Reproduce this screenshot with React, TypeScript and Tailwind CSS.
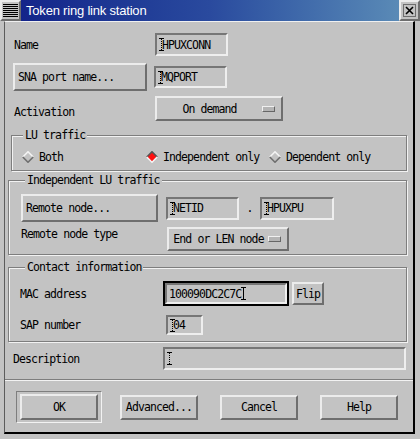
import React from "react";

const mono =
  "font-['DejaVu_Sans_Mono',monospace] text-[11.5px] leading-[14px] tracking-[-0.9px] text-black";

const raised =
  "border-2 border-t-[#ececec] border-l-[#ececec] border-b-[#6e6e6e] border-r-[#6e6e6e]";
const sunken =
  "border-2 border-t-[#767676] border-l-[#767676] border-b-[#eeeeee] border-r-[#eeeeee]";
const etched =
  "border border-[#7e7e7e] shadow-[inset_1px_1px_0_#f2f2f2,1px_1px_0_#f2f2f2]";

// dotted i-beam shown in fields that don't have focus
function Caret({ active = false }: { active?: boolean }) {
  return (
    <svg width="5" height="13" viewBox="0 0 5 13" className="shrink-0">
      <path d="M0 0.5H5M0 12.5H5" stroke="#000" strokeWidth="1" />
      <path
        d="M2.5 1V12"
        stroke="#000"
        strokeWidth="1"
        strokeDasharray={active ? undefined : "1 1"}
      />
    </svg>
  );
}

function Field({
  value,
  w,
  h,
}: {
  value: string;
  w: string;
  h: string;
}) {
  return (
    <div className={`${sunken} ${w} ${h} flex items-center pl-[2px]`}>
      <Caret />
      <span className={`${mono} -ml-[2px]`}>{value}</span>
    </div>
  );
}

function Button({
  label,
  w,
  h,
  left = false,
}: {
  label: string;
  w: string;
  h: string;
  left?: boolean;
}) {
  return (
    <div
      className={`${raised} ${w} ${h} flex items-center ${
        left ? "pl-[3px]" : "justify-center"
      }`}
    >
      <span className={mono}>{label}</span>
    </div>
  );
}

function OptionMenu({ label, w, h }: { label: string; w: string; h: string }) {
  return (
    <div className={`${raised} ${w} ${h} flex items-center`}>
      <span className={`${mono} flex-1 text-center`}>{label}</span>
      <div className="w-[13px] h-[6px] mr-[6px] border border-t-[#f0f0f0] border-l-[#f0f0f0] border-b-[#666] border-r-[#666] bg-[#b4b4b4]" />
    </div>
  );
}

function Diamond({ on }: { on: boolean }) {
  return (
    <svg width="12" height="12" viewBox="0 0 12 12" className="shrink-0">
      <polygon points="6,0.8 11.2,6 6,11.2 0.8,6" fill={on ? "#ff1010" : "#c3c3c3"} />
      <polyline
        points="0.8,6 6,0.8 11.2,6"
        fill="none"
        stroke={on ? "#555" : "#f4f4f4"}
        strokeWidth="1.6"
      />
      <polyline
        points="0.8,6 6,11.2 11.2,6"
        fill="none"
        stroke={on ? "#f4f4f4" : "#6e6e6e"}
        strokeWidth="1.6"
      />
    </svg>
  );
}

function Radio({ label, on, w }: { label: string; on: boolean; w: string }) {
  return (
    <div className={`${w} flex items-center gap-[5px]`}>
      <Diamond on={on} />
      <span className={mono}>{label}</span>
    </div>
  );
}

function Legend({ text, ml }: { text: string; ml: string }) {
  return (
    <div className={`${ml} -mt-[8px] w-fit px-[2px] bg-[#c3c3c3] ${mono}`}>
      {text}
    </div>
  );
}

export default function App() {
  return (
    <div className="w-[420px] h-[439px] bg-[#c3c3c3] overflow-hidden">
      {/* title bar */}
      <div className="flex h-[21px]">
        <div className={`${raised} w-[21px] h-[21px] flex items-center justify-center border`}>
          <svg width="15" height="15" viewBox="0 0 15 15">
            {[1, 3, 5, 7, 9, 11, 13].map((y) => (
              <rect key={y} x="0" y={y} width="15" height="1" fill="#000" />
            ))}
          </svg>
        </div>
        <div className="flex-1 h-[21px] bg-gradient-to-r from-[#14248a] via-[#2a4a9e] to-[#5a8ab6] flex items-center pl-[5px]">
          <span className="font-['Liberation_Sans',Arial,sans-serif] text-[13px] tracking-[-0.2px] text-white leading-[16px]">
            Token ring link station
          </span>
        </div>
        <div className={`${raised} w-[21px] h-[21px] flex items-center justify-center border`}>
          <svg width="13" height="13" viewBox="0 0 13 13">
            <rect x="0.5" y="0.5" width="12" height="12" fill="#c3c3c3" stroke="#6e6e6e" />
            <path d="M3 3L10 10M10 3L3 10" stroke="#000" strokeWidth="1.6" />
          </svg>
        </div>
      </div>

      {/* dialog body */}
      <div className="ml-[4px] w-[411px] h-[413px] border-l border-l-[#5c5c5c] border-t border-t-[#f0f0f0] border-r-2 border-r-black border-b-2 border-b-black flex flex-col">
        <div className="mt-[11px] h-[23px] flex items-center">
          <span className={`${mono} ml-[9px] w-[141px]`}>Name</span>
          <Field value="HPUXCONN" w="w-[73px]" h="h-[23px]" />
        </div>

        <div className="mt-[7px] h-[28px] flex items-center">
          <div className="ml-[8px]">
            <Button label="SNA port name..." w="w-[134px]" h="h-[28px]" left />
          </div>
          <div className="ml-[7px]">
            <Field value="MQPORT" w="w-[73px]" h="h-[22px]" />
          </div>
        </div>

        <div className="mt-[5px] h-[25px] flex items-center">
          <span className={`${mono} ml-[9px] w-[141px] mt-[6px]`}>Activation</span>
          <OptionMenu label="On demand" w="w-[128px]" h="h-[25px]" />
        </div>

        {/* LU traffic */}
        <div className={`${etched} mt-[14px] ml-[6px] w-[396px] h-[36px]`}>
          <Legend text="LU traffic" ml="ml-[11px]" />
          <div className="mt-[8px] h-[14px] flex items-center pl-[10px]">
            <Radio label="Both" on={false} w="w-[124px]" />
            <Radio label="Independent only" on w="w-[123px]" />
            <Radio label="Dependent only" on={false} w="w-[130px]" />
          </div>
        </div>

        {/* Independent LU traffic */}
        <div className={`${etched} mt-[9px] ml-[3px] w-[399px] h-[75px]`}>
          <Legend text="Independent LU traffic" ml="ml-[16px]" />
          <div className="mt-[7px] h-[28px] flex items-center">
            <div className="ml-[12px]">
              <Button label="Remote node..." w="w-[137px]" h="h-[28px]" left />
            </div>
            <div className="ml-[8px]">
              <Field value="NETID" w="w-[73px]" h="h-[23px]" />
            </div>
            <span className={`${mono} w-[21px] text-center`}>.</span>
            <Field value="HPUXPU" w="w-[74px]" h="h-[23px]" />
          </div>
          <div className="mt-[5px] h-[24px] flex items-start">
            <span className={`${mono} ml-[12px] w-[146px]`}>Remote node type</span>
            <OptionMenu label="End or LEN node" w="w-[122px]" h="h-[24px]" />
          </div>
        </div>

        {/* Contact information */}
        <div className={`${etched} mt-[12px] ml-[3px] w-[399px] h-[75px]`}>
          <Legend text="Contact information" ml="ml-[16px]" />
          <div className="mt-[7px] h-[25px] flex items-center">
            <span className={`${mono} ml-[11px] w-[143px]`}>MAC address</span>
            <div className="w-[126px] h-[25px] border-2 border-black">
              <div className={`${sunken} w-full h-full flex items-center pl-[2px]`}>
                <span className={mono}>100090DC2C7C</span>
                <Caret active />
              </div>
            </div>
            <div className="ml-[3px]">
              <Button label="Flip" w="w-[32px]" h="h-[23px]" />
            </div>
          </div>
          <div className="mt-[9px] h-[20px] flex items-center">
            <span className={`${mono} ml-[11px] w-[146px]`}>SAP number</span>
            <Field value="04" w="w-[37px]" h="h-[20px]" />
          </div>
        </div>

        <div className="mt-[5px] h-[23px] flex items-center">
          <span className={`${mono} ml-[8px] w-[150px]`}>Description</span>
          <Field value="" w="w-[243px]" h="h-[23px]" />
        </div>

        <div className="mt-[9px] h-[2px] border-t border-t-[#7e7e7e] border-b border-b-[#f2f2f2]" />

        <div className="mt-[10px] h-[32px] flex items-center">
          <div className="ml-[11px] w-[86px] h-[32px] border border-t-[#7e7e7e] border-l-[#7e7e7e] border-b-[#f2f2f2] border-r-[#f2f2f2] flex items-center justify-center">
            <Button label="OK" w="w-[78px]" h="h-[26px]" />
          </div>
          <div className="ml-[18px]">
            <Button label="Advanced..." w="w-[78px]" h="h-[25px]" />
          </div>
          <div className="ml-[22px]">
            <Button label="Cancel" w="w-[78px]" h="h-[25px]" />
          </div>
          <div className="ml-[22px]">
            <Button label="Help" w="w-[78px]" h="h-[25px]" />
          </div>
        </div>
      </div>
    </div>
  );
}
